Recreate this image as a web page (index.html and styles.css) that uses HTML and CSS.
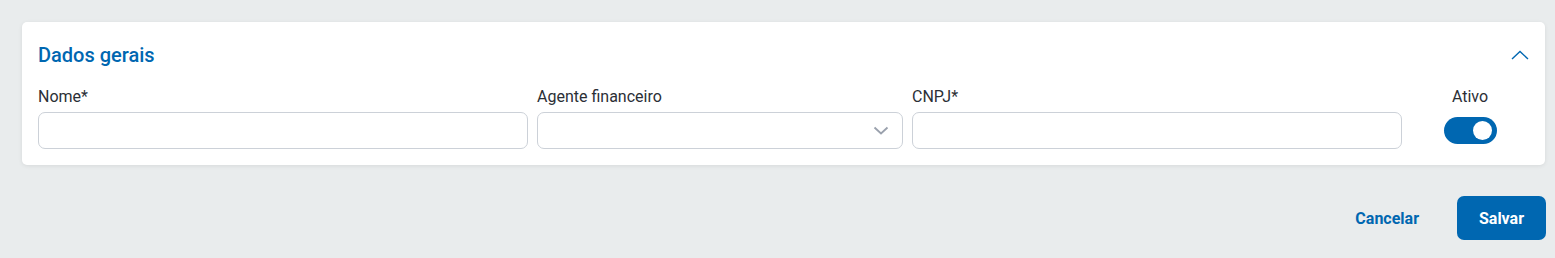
FILE: index.html
```html
<!DOCTYPE html>
<html lang="pt-BR">
<head>
  <meta charset="UTF-8">
  <title>Dados gerais</title>
  <link rel="stylesheet" href="styles.css">
</head>
<body>
  <div class="page">
    <div class="card">
      <div class="card-header">
        <h2>Dados gerais</h2>
        <svg class="collapse" width="18" height="10" viewBox="0 0 18 10">
          <path d="M1 9 L9 1.5 L17 9" fill="none" stroke="#0067b1" stroke-width="1.4"/>
        </svg>
      </div>
      <div class="fields">
        <div class="field">
          <label>Nome*</label>
          <input type="text">
        </div>
        <div class="field">
          <label>Agente financeiro</label>
          <div class="select">
            <svg width="16" height="9" viewBox="0 0 16 9">
              <path d="M1.5 1.5 L8 7.5 L14.5 1.5" fill="none" stroke="#9aa1ad" stroke-width="1.8"/>
            </svg>
          </div>
        </div>
        <div class="field">
          <label>CNPJ*</label>
          <input type="text">
        </div>
        <div class="field field-center">
          <label>Ativo</label>
          <div class="toggle-wrap">
            <span class="toggle"><span class="knob"></span></span>
          </div>
        </div>
      </div>
    </div>
    <div class="actions">
      <button class="btn btn-link">Cancelar</button>
      <button class="btn btn-primary">Salvar</button>
    </div>
  </div>
</body>
</html>
```
FILE: styles.css
```css
* { margin: 0; padding: 0; box-sizing: border-box; }
html, body {
  font-family: Roboto, 'Liberation Sans', sans-serif;
  background-color: #e9eced;
  color: #2b2f36;
}
.page {
  padding: 22px 9px 0 22px;
}
.card {
  background-color: #fff;
  border-radius: 5px;
  box-shadow: 0 1px 4px rgba(0,0,0,0.08);
  padding: 21px 16px 16px;
  margin-right: 1px;
}
.card-header {
  display: flex;
  align-items: center;
  justify-content: space-between;
  height: 24px;
}
.card-header h2 {
  font-size: 20px;
  line-height: 24px;
  font-weight: 500;
  color: #0067b1;
}
.collapse {
  margin-top: -1px;
}
.fields {
  display: grid;
  grid-template-columns: 490px 366px 490px 1fr;
  column-gap: 9px;
  margin-top: 20px;
}
.field label {
  display: block;
  font-size: 16px;
  line-height: 20px;
  color: #2b2f36;
  margin-bottom: 5px;
}
.field input,
.select {
  width: 100%;
  height: 37px;
  border: 1px solid #ccd1d8;
  border-radius: 7px;
  background-color: #fff;
  font-size: 16px;
}
.select {
  display: flex;
  align-items: center;
  justify-content: flex-end;
  padding-right: 13px;
}
.field-center {
  text-align: center;
}
.toggle-wrap {
  height: 37px;
  display: flex;
  align-items: center;
  justify-content: center;
}
.toggle {
  display: flex;
  align-items: center;
  justify-content: flex-end;
  width: 53px;
  height: 27px;
  border-radius: 14px;
  background-color: #0067b1;
  padding-right: 5px;
}
.knob {
  width: 19px;
  height: 19px;
  border-radius: 50%;
  background-color: #fff;
}
.actions {
  display: flex;
  justify-content: flex-end;
  align-items: center;
  gap: 22px;
  margin-top: 31px;
}
.btn {
  font-family: Roboto, 'Liberation Sans', sans-serif;
  font-size: 16px;
  font-weight: bold;
  border: none;
  cursor: pointer;
}
.btn-link {
  background: none;
  color: #0067b1;
  padding: 0 16px;
}
.btn-primary {
  width: 89px;
  height: 44px;
  border-radius: 7px;
  background-color: #0067b1;
  color: #fff;
}
```
